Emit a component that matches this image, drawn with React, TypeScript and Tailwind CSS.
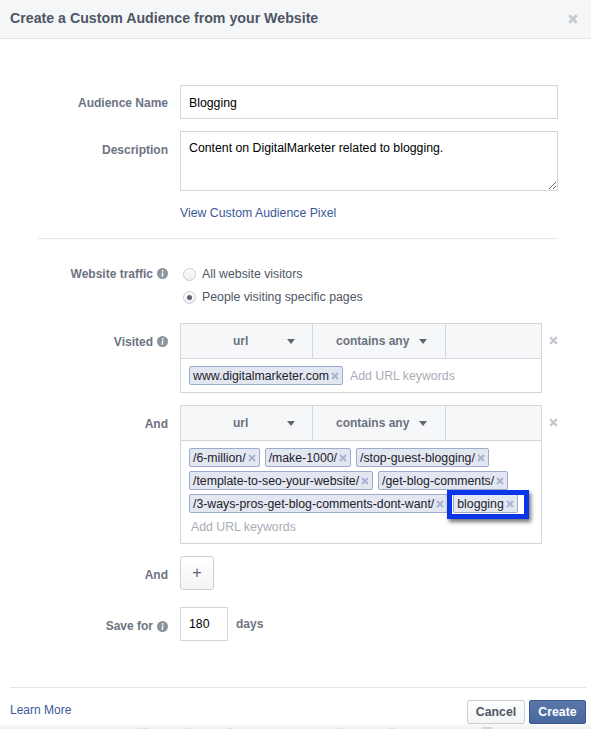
import React from "react";

const font = { fontFamily: '"Liberation Sans", Arial, sans-serif' };

function Info() {
  return (
    <svg width="11" height="11" viewBox="0 0 11 11" className="inline-block shrink-0">
      <circle cx="5.5" cy="5.5" r="5.5" fill="#8d949e" />
      <path d="M5 4.6 H6.4 L6 8.8 H4.6 Z" fill="#fff" />
      <rect x="5" y="2.2" width="1.5" height="1.5" fill="#fff" />
    </svg>
  );
}

function X({ color = "#a9b3cf", size = 8 }: { color?: string; size?: number }) {
  return (
    <svg width={size} height={size} viewBox="0 0 8 8" className="shrink-0">
      <path d="M1 1 L7 7 M7 1 L1 7" stroke={color} strokeWidth="2" />
    </svg>
  );
}

function Caret() {
  return <span className="w-0 h-0 border-x-[4.5px] border-x-transparent border-t-[5px] border-t-[#5f6673]" />;
}

function Tag({ text, boxed }: { text: string; boxed?: boolean }) {
  return (
    <span className="relative inline-flex items-center h-[19px] pl-[3px] pr-[3px] pt-[1px] gap-[2px] bg-[#e3e7f1] border border-[#9daccb] rounded-[2px] text-[12.3px] text-[#1d2129]">
      {text}
      <X />
      {boxed && (
        <span className="absolute left-[-7px] top-[-5px] w-[82px] h-[29px] border-[5px] border-[#0a35e8] shadow-[2px_3px_4px_rgba(0,0,0,0.55)]" />
      )}
    </span>
  );
}

function Rule({ tags }: { tags: string[] }) {
  return (
    <div className="flex items-start">
      <div className="w-[362px] border border-[#d3d6db]">
        <div className="flex h-[35px] bg-[#f6f7f8] border-b border-[#d3d6db] text-[12px] font-bold text-[#6b7280]">
          <div className="w-[132px] flex items-center border-r border-[#d3d6db] pl-[52px]">
            <span className="w-[54px]">url</span>
            <Caret />
          </div>
          <div className="w-[133px] flex items-center border-r border-[#d3d6db] pl-[23px]">
            <span className="mr-[10px]">contains any</span>
            <Caret />
          </div>
        </div>
        <div className="flex flex-wrap gap-x-[5px] gap-y-[4px] px-[8px] py-[7px]">
          {tags.map((t) => (
            <Tag key={t} text={t} boxed={t === "blogging"} />
          ))}
          <span className="h-[19px] flex items-center pl-[2px] pt-[2px] text-[12.3px] text-[#a8adb7]">Add URL keywords</span>
        </div>
      </div>
      <div className="ml-[7px] mt-[13px]">
        <X color="#c4c8cf" size={9} />
      </div>
    </div>
  );
}

function Label({ children, icon, className }: { children: React.ReactNode; icon?: boolean; className?: string }) {
  return (
    <div className={`w-[168px] shrink-0 mr-[12px] flex justify-end items-center gap-[4px] text-[12px] font-bold text-[#6c7482] ${className ?? ""}`}>
      <span>{children}</span>
      {icon && <Info />}
    </div>
  );
}

function Radio({ checked, children }: { checked?: boolean; children: React.ReactNode }) {
  return (
    <div className="flex items-center h-[23px] text-[12.3px] text-[#4e5665]">
      <span className="w-[13px] h-[13px] rounded-full border border-[#c9ccd2] bg-gradient-to-b from-white to-[#eceef1] flex items-center justify-center mr-[6px] ml-[3px]">
        {checked && <span className="w-[5px] h-[5px] rounded-full bg-[#5b6270]" />}
      </span>
      {children}
    </div>
  );
}

export default function App() {
  return (
    <div style={font} className="w-[591px] h-[729px] overflow-hidden bg-white flex flex-col">
      <div className="h-[39px] shrink-0 bg-[#f5f6f7] border-b border-[#e5e5e5] flex items-center justify-between pl-[10px] pr-[13px]">
        <span className="text-[14.2px] font-bold text-[#4e5665]">Create a Custom Audience from your Website</span>
        <X color="#c4c8cf" size={10} />
      </div>

      <div className="flex-1 flex flex-col pt-[46px]">
        <div className="flex">
          <Label className="h-[36px]">Audience Name</Label>
          <input
            readOnly
            value="Blogging"
            className="w-[378px] h-[34px] border border-[#d3d6db] px-[8px] pt-[1px] text-[12.3px] text-black outline-none"
          />
        </div>
        <div className="flex mt-[10px]">
          <Label className="h-[38px]">Description</Label>
          <textarea
            readOnly
            value="Content on DigitalMarketer related to blogging."
            className="block w-[378px] h-[60px] border border-[#d3d6db] px-[8px] pt-[7px] text-[12.3px] text-black outline-none"
          />
        </div>
        <div className="ml-[180px] mt-[15px] text-[12.3px] text-[#3b5998] h-[14px] leading-[14px]">View Custom Audience Pixel</div>
        <div className="ml-[38px] mr-[34px] mt-[18px] border-t border-[#e5e5e5]" />

        <div className="flex mt-[23px]">
          <Label className="h-[23px]" icon>Website traffic</Label>
          <div className="pt-[1px]">
            <Radio>All website visitors</Radio>
            <Radio checked>People visiting specific pages</Radio>
          </div>
        </div>

        <div className="flex mt-[14px]">
          <Label className="h-[37px]" icon>Visited</Label>
          <Rule tags={["www.digitalmarketer.com"]} />
        </div>

        <div className="flex mt-[12px]">
          <Label className="h-[37px]">And</Label>
          <Rule
            tags={[
              "/6-million/",
              "/make-1000/",
              "/stop-guest-blogging/",
              "/template-to-seo-your-website/",
              "/get-blog-comments/",
              "/3-ways-pros-get-blog-comments-dont-want/",
              "blogging",
            ]}
          />
        </div>

        <div className="flex mt-[12px]">
          <Label className="h-[38px]">And</Label>
          <div className="w-[34px] h-[34px] rounded-[3px] border border-[#ccd0d5] bg-gradient-to-b from-white to-[#f3f4f6] flex items-center justify-center text-[16px] text-[#5b6270]">+</div>
        </div>

        <div className="flex mt-[13px]">
          <Label className="h-[38px]" icon>Save for</Label>
          <input readOnly value="180" className="w-[48px] h-[34px] border border-[#d3d6db] px-[8px] text-[12.3px] text-black outline-none" />
          <span className="ml-[8px] h-[33px] flex items-center text-[12px] font-bold text-[#6c7482]">days</span>
        </div>
      </div>

      <div className="h-[37px] mx-[10px] mr-[5px] border-t border-[#e5e5e5] flex justify-between shrink-0">
        <span className="mt-[15px] text-[12px] leading-[14px] text-[#3b5998]">Learn More</span>
        <div className="flex gap-[4px] mt-[12px] text-[12.3px] font-bold">
          <span className="w-[58px] h-[24px] rounded-[2px] border border-[#ccd0d5] bg-gradient-to-b from-white to-[#f3f4f6] text-[#4e5665] flex items-center justify-center">Cancel</span>
          <span className="w-[57px] h-[24px] rounded-[2px] border border-[#3b5a94] bg-gradient-to-b from-[#5b78ab] to-[#48679b] text-white flex items-center justify-center">Create</span>
        </div>
      </div>
      <div className="relative h-[5px] shrink-0 bg-gradient-to-b from-[#fafafa] to-[#f1f1f1] overflow-hidden">
        <span className="absolute left-[136px] top-[4px] w-[14px] h-[4px] rounded-full bg-[#e2e2e2]" />
        <span className="absolute left-[184px] top-[4px] w-[8px] h-[4px] rounded-full bg-[#e2e2e2]" />
        <span className="absolute left-[226px] top-[4px] w-[8px] h-[4px] rounded-full bg-[#e2e2e2]" />
        <span className="absolute left-[335px] top-[4px] w-[8px] h-[4px] rounded-full bg-[#e2e2e2]" />
        <span className="absolute left-[388px] top-[4px] w-[8px] h-[4px] rounded-full bg-[#e2e2e2]" />
        <span className="absolute left-[481px] top-[3px] w-[12px] h-[5px] rounded-full bg-[#d6d6d6]" />
      </div>
    </div>
  );
}
